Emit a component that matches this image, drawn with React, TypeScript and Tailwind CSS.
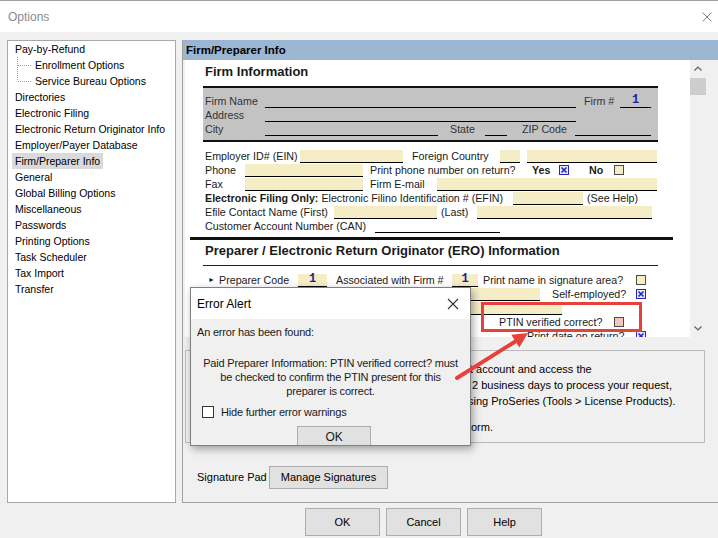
import React from 'react';

type TreeItem = { label: string; sub?: 'mid' | 'end'; selected?: boolean };

const treeItems: TreeItem[] = [
  { label: 'Pay-by-Refund' },
  { label: 'Enrollment Options', sub: 'mid' },
  { label: 'Service Bureau Options', sub: 'end' },
  { label: 'Directories' },
  { label: 'Electronic Filing' },
  { label: 'Electronic Return Originator Info' },
  { label: 'Employer/Payer Database' },
  { label: 'Firm/Preparer Info', selected: true },
  { label: 'General' },
  { label: 'Global Billing Options' },
  { label: 'Miscellaneous' },
  { label: 'Passwords' },
  { label: 'Printing Options' },
  { label: 'Task Scheduler' },
  { label: 'Tax Import' },
  { label: 'Transfer' },
];

function TreeLine({ last }: { last?: boolean }) {
  return (
    <svg width="14" height="16" className="shrink-0">
      <line x1="0.5" y1="0" x2="0.5" y2={last ? 8.5 : 16} stroke="#a0a0a0" strokeDasharray="1 1" />
      <line x1="1" y1="8.5" x2="14" y2="8.5" stroke="#a0a0a0" strokeDasharray="1 1" />
    </svg>
  );
}

// label with a fixed slot width so that the next field starts where the form has it
function L({ c = '', b, children }: { c?: string; b?: boolean; children?: React.ReactNode }) {
  return (
    <span className={`shrink-0 whitespace-nowrap h-[14px] leading-[14px] ${b ? 'font-bold' : ''} ${c}`}>{children}</span>
  );
}

function F({ c = '', y, children }: { c?: string; y?: boolean; children?: React.ReactNode }) {
  return (
    <span className={`shrink-0 h-[13px] border-b border-black flex items-end justify-center ${y ? 'bg-[#f4edc6]' : ''} ${c}`}>
      {children}
    </span>
  );
}

function Num() {
  return <span className="font-['Liberation_Mono',monospace] font-bold text-[12px] leading-[13px] text-[#1d1d9c]">1</span>;
}

function Box({ pink }: { pink?: boolean }) {
  return (
    <span className={`shrink-0 w-[10px] h-[10px] mb-[2px] border border-[#4a4a4a] ${pink ? 'bg-[#f0c6bd]' : 'bg-[#f4edc6]'}`} />
  );
}

function XBox() {
  return (
    <svg width="10" height="10" className="shrink-0 mb-[2px]">
      <rect x="0.5" y="0.5" width="9" height="9" fill="#e8e8ff" stroke="#2424c4" />
      <path d="M2.5 2.5 L7.5 7.5 M7.5 2.5 L2.5 7.5" stroke="#2424c4" strokeWidth="1.6" />
    </svg>
  );
}

function Row({ c = '', children }: { c?: string; children: React.ReactNode }) {
  return <div className={`flex items-end h-[14px] ${c}`}>{children}</div>;
}

function FormArea() {
  return (
    <div className="w-[505px] h-[277px] bg-white overflow-hidden text-[10.7px] text-[#1a1a1a] shrink-0">
      <div className="pt-[4px] pl-[20px] font-bold text-[13px] leading-[16px]">Firm Information</div>

      <div className="mt-[6px] ml-[18px] w-[455px] bg-[#c3c3c3] border-y-2 border-[#111] pt-[6px] pb-[4px] pl-[2px] text-[#333]">
        <Row>
          <L c="w-[60px]">Firm Name</L>
          <F c="w-[311px]" />
          <L c="ml-[8px] w-[36px]">Firm #</L>
          <F c="w-[31px]"><Num /></F>
        </Row>
        <Row>
          <L c="w-[60px]">Address</L>
          <F c="w-[311px]" />
        </Row>
        <Row>
          <L c="w-[60px]">City</L>
          <F c="w-[173px]" />
          <L c="ml-[12px] w-[35px]">State</L>
          <F c="w-[22px]" />
          <L c="ml-[15px] w-[53px]">ZIP Code</L>
          <F c="w-[76px]" />
        </Row>
      </div>

      <div className="mt-[7px] pl-[20px]">
        <Row>
          <L c="w-[95px]">Employer ID# (EIN)</L>
          <F y c="w-[103px]" />
          <L c="ml-[9px] w-[88px]">Foreign Country</L>
          <F y c="w-[20px]" />
          <F y c="ml-[7px] w-[130px]" />
        </Row>
        <Row>
          <L c="w-[40px]">Phone</L>
          <F y c="w-[118px]" />
          <L c="ml-[7px] w-[162px]">Print phone number on return?</L>
          <L b c="w-[27px]">Yes</L>
          <XBox />
          <L b c="ml-[20px] w-[25px]">No</L>
          <Box />
        </Row>
        <Row>
          <L c="w-[40px]">Fax</L>
          <F y c="w-[118px]" />
          <L c="ml-[7px] w-[67px]">Firm E-mail</L>
          <F y c="w-[220px]" />
        </Row>
        <Row>
          <L c="w-[308px]">
            <b>Electronic Filing Only:</b> Electronic Filino Identification # (EFIN)
          </L>
          <F y c="w-[70px]" />
          <L c="ml-[4px]">(See Help)</L>
        </Row>
        <Row>
          <L c="w-[129px]">Efile Contact Name (First)</L>
          <F y c="w-[103px]" />
          <L c="ml-[4px] w-[36px]">(Last)</L>
          <F y c="w-[175px]" />
        </Row>
        <Row>
          <L c="w-[170px]">Customer Account Number (CAN)</L>
          <F c="w-[125px]" />
        </Row>
      </div>

      <div className="mt-[4px] ml-[5px] w-[483px] h-[3px] bg-[#111]" />
      <div className="mt-[3px] pl-[20px] font-bold text-[13px] leading-[16px]">
        Preparer / Electronic Return Originator (ERO) Information
      </div>
      <div className="mt-[6px] ml-[18px] w-[455px] h-[1px] bg-[#222]" />

      <div className="mt-[7px] pl-[21px]">
        <Row>
          <L c="w-[13px] text-[7px] pl-[2px]">►</L>
          <L c="w-[79px]">Preparer Code</L>
          <F y c="w-[29px]"><Num /></F>
          <L c="ml-[9px] w-[116px]">Associated with Firm #</L>
          <F y c="w-[26px]"><Num /></F>
          <L c="ml-[5px] w-[153px]">Print name in signature area?</L>
          <Box />
        </Row>
        <Row>
          <F y c="ml-[92px] w-[242px]" />
          <L c="ml-[12px] w-[84px]">Self-employed?</L>
          <XBox />
        </Row>
        <Row>
          <F y c="ml-[92px] w-[264px]" />
        </Row>
        <Row>
          <L c="ml-[293px] w-[115px]">PTIN verified correct?</L>
          <Box pink />
        </Row>
        <Row>
          <L c="ml-[321px] w-[109px]">Print date on return?</L>
          <XBox />
        </Row>
      </div>
    </div>
  );
}

function Scrollbar() {
  return (
    <div className="w-[16px] h-[277px] flex flex-col shrink-0">
      <div className="h-[17px] flex items-center justify-center">
        <svg width="8" height="5"><path d="M0.5 4.5 L4 1 L7.5 4.5" fill="none" stroke="#606060" strokeWidth="1.2" /></svg>
      </div>
      <div className="mt-[1px] h-[17px] bg-[#cdcdcd]" />
      <div className="flex-1" />
      <div className="h-[17px] flex items-center justify-center">
        <svg width="8" height="5"><path d="M0.5 0.5 L4 4 L7.5 0.5" fill="none" stroke="#606060" strokeWidth="1.2" /></svg>
      </div>
    </div>
  );
}

function Btn({ c = '', children }: { c?: string; children: React.ReactNode }) {
  return (
    <div className={`bg-[#e1e1e1] border border-[#adadad] flex items-center justify-center text-[11px] ${c}`}>{children}</div>
  );
}

function ErrorAlert() {
  return (
    <div className="absolute left-[190px] top-[287px] w-[281px] h-[159px] bg-[#f0f0f0] border border-[#7f7f7f] overflow-hidden shadow-[2px_3px_8px_rgba(0,0,0,0.35)]">
      <div className="h-[31px] bg-white flex items-center justify-between pl-[6px] pr-[11px] text-[12px]">
        <span>Error Alert</span>
        <svg width="12" height="12">
          <path d="M1 1 L11 11 M11 1 L1 11" stroke="#333" strokeWidth="1.1" />
        </svg>
      </div>
      <div className="text-[11px] tracking-[-0.2px] text-[#1a1a1a]">
        <div className="pt-[5px] pl-[6px] leading-[16px]">An error has been found:</div>
        <div className="mt-[16px] px-[8px] text-center leading-[14px]">
          Paid Preparer Information: PTIN verified correct? must
          <br />
          be checked to confirm the PTIN present for this
          <br />
          preparer is correct.
        </div>
        <div className="mt-[7px] pl-[11px] flex items-center gap-[7px] h-[14px]">
          <span className="w-[12px] h-[12px] bg-white border border-[#333]" />
          <span>Hide further error warnings</span>
        </div>
        <div className="mt-[7px] ml-[106px] w-[74px] h-[24px] bg-[#e1e1e1] border border-[#adadad] text-center text-[12px] leading-[21px]">
          OK
        </div>
      </div>
    </div>
  );
}

export default function App() {
  return (
    <div className="relative w-[718px] h-[538px] overflow-hidden bg-[#f0f0f0] font-['Liberation_Sans',Arial,sans-serif] text-[10.5px] text-black">
      {/* window title */}
      <div className="h-[32px] bg-white border-t border-[#a0a0a0] flex items-center justify-between pl-[8px] pr-[6px]">
        <span className="text-[12px] text-[#8a8a8a]">Options</span>
        <svg width="10" height="10">
          <path d="M0.5 0.5 L9.5 9.5 M9.5 0.5 L0.5 9.5" stroke="#808080" strokeWidth="1" />
        </svg>
      </div>

      <div className="flex gap-[6px] pl-[7px] pt-[8px]">
        {/* options tree */}
        <div className="w-[169px] h-[463px] bg-white border border-[#a8a8a8] shrink-0">
          {treeItems.map((item) =>
            item.sub ? (
              <div key={item.label} className="flex items-center h-[16px] pl-[9px]">
                <TreeLine last={item.sub === 'end'} />
                <span className="ml-[1px] px-[3px] leading-[16px]">{item.label}</span>
              </div>
            ) : (
              <div key={item.label} className="flex items-center h-[16px] pl-[4px]">
                <span className={`px-[3px] leading-[16px] ${item.selected ? 'bg-[#dadada]' : ''}`}>{item.label}</span>
              </div>
            ),
          )}
        </div>

        {/* page */}
        <div className="w-[536px] h-[463px] flex flex-col border-l border-b border-[#a0a0a0] shrink-0">
          <div className="h-[20px] bg-[#9cb6d2] pl-[3px] font-bold text-[11.5px] leading-[20px]">Firm/Preparer Info</div>
          <div className="flex pl-[2px]">
            <FormArea />
            <Scrollbar />
          </div>
          <div className="ml-[2px] mt-[13px] w-[520px] h-[93px] border border-[#bcbcbc] pl-[282px] pt-[10px] text-[11px] leading-[16px] whitespace-nowrap">
            <div className="ml-[2px]">t account and access the</div>
            <div className="ml-[4px]">2 business days to process your request,</div>
            <div>sing ProSeries (Tools &gt; License Products).</div>
            <div className="mt-[10px] ml-[3px]">orm.</div>
          </div>
          <div className="flex items-center mt-[23px] ml-[14px]">
            <span className="w-[72px] text-[11px]">Signature Pad</span>
            <Btn c="w-[119px] h-[23px]">Manage Signatures</Btn>
          </div>
        </div>
      </div>

      {/* dialog buttons */}
      <div className="flex gap-[6px] pl-[305px] pt-[5px]">
        <Btn c="w-[75px] h-[28px]">OK</Btn>
        <Btn c="w-[75px] h-[28px]">Cancel</Btn>
        <Btn c="w-[75px] h-[28px]">Help</Btn>
      </div>

      <ErrorAlert />

      {/* annotation: red highlight box and arrow */}
      <div className="absolute left-[481px] top-[302px] w-[161px] h-[30px] border-[3px] border-[#e8413c]" />
      <svg className="absolute left-[450px] top-[326px]" width="85" height="60">
        <line x1="7" y1="52" x2="66" y2="15" stroke="#e8413c" strokeWidth="4" strokeLinecap="round" />
        <polygon points="78,7 69.3,21.4 61.3,8.7" fill="#e8413c" />
      </svg>
    </div>
  );
}
